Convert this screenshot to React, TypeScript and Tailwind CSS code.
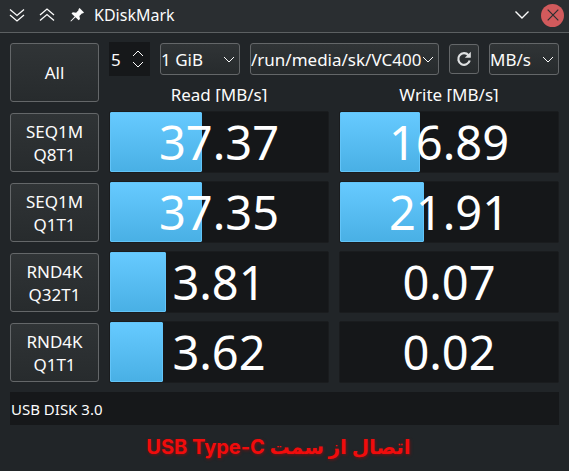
import { useState } from "react";

const tests = [
  { lines: ["SEQ1M", "Q8T1"], read: "37.37", readBar: 42, write: "16.89", writeBar: 36.5 },
  { lines: ["SEQ1M", "Q1T1"], read: "37.35", readBar: 42, write: "21.91", writeBar: 38.5 },
  { lines: ["RND4K", "Q32T1"], read: "3.81", readBar: 25.5, write: "0.07", writeBar: 0 },
  { lines: ["RND4K", "Q1T1"], read: "3.62", readBar: 24.5, write: "0.02", writeBar: 0 },
];

const buttonLook =
  "rounded-[3px] border border-[#646769] bg-linear-to-b from-[#303436] to-[#272b2d]";

function Chevron({ className = "" }: { className?: string }) {
  return (
    <svg viewBox="0 0 12 7" fill="none" stroke="currentColor" className={className} aria-hidden="true">
      <path d="M1 1l5 5 5-5" />
    </svg>
  );
}

function Select({ label, options, className = "" }: { label: string; options: string[]; className?: string }) {
  return (
    <div className={`relative h-8 ${className}`}>
      <select aria-label={label} className={`block h-full w-full appearance-none pt-px pr-4 leading-6 outline-none ${buttonLook}`}>
        {options.map((option) => (
          <option key={option}>{option}</option>
        ))}
      </select>
      <Chevron className="pointer-events-none absolute top-[13px] right-[5px] h-[7px] w-3" />
    </div>
  );
}

function TitleBar() {
  return (
    <header className="flex h-[33px] items-center border-b border-[#5c6062] bg-[#2a2e31] pr-[5px] pb-[2px] pl-2 text-[16px]">
      <button title="Keep below" className="mr-3 flex w-[18px] justify-center">
        <svg viewBox="0 0 18 16" fill="none" stroke="currentColor" strokeWidth="1.3" className="h-4 w-[18px]">
          <path d="M2 2.5l7 6 7-6M2 8l7 6 7-6" />
        </svg>
      </button>
      <button title="Keep above" className="mr-3 flex w-[18px] justify-center">
        <svg viewBox="0 0 18 16" fill="none" stroke="currentColor" strokeWidth="1.3" className="h-4 w-[18px]">
          <path d="M2 8l7-6 7 6M2 13.5l7-6 7 6" />
        </svg>
      </button>
      <button title="Pin to all desktops" className="mr-2 flex w-[18px] justify-center">
        <svg viewBox="0 0 16 16" fill="currentColor" className="size-4">
          <path d="M10.6 1L15 5.4l-1.2 1.1-.7-.2-2.7 2.6.6 3.1-1.3 1.2-3.2-3L2 14.6l-.6-.6 4.3-4.6-3.2-3L3.800 5.200l3.300.5 2.600-2.700-.3-.8z" />
        </svg>
      </button>
      <h1 className="flex-1">KDiskMark</h1>
      <button title="Minimize" className="mr-[11px]">
        <svg viewBox="0 0 16 10" fill="none" stroke="currentColor" strokeWidth="1.4" className="h-[10px] w-4">
          <path d="M1.5 1.5L8 8l6.5-6.5" />
        </svg>
      </button>
      <button title="Close" className="flex size-[23px] items-center justify-center rounded-full bg-[#d15a5c] text-[#2a2e31]">
        <svg viewBox="0 0 12 12" fill="none" stroke="currentColor" strokeWidth="1.2" className="size-3">
          <path d="M.7.7l10.6 10.6M11.3.7L.7 11.3" />
        </svg>
      </button>
    </header>
  );
}

function Toolbar() {
  const [count, setCount] = useState(5);

  return (
    <div className="flex items-center gap-[10px]">
      <div className="flex h-[34px] w-[41px] items-center bg-[#16181a] pl-[2px]">
        <input
          type="number"
          aria-label="Test count"
          min={1}
          max={9}
          value={count}
          onChange={(e) => setCount(Number(e.target.value))}
          className="w-[21px] flex-none [appearance:textfield] bg-transparent pt-px outline-none [&::-webkit-inner-spin-button]:appearance-none"
        />
        <div className="flex flex-col gap-1">
          <button aria-label="Increase" className="block" onClick={() => setCount(Math.min(9, count + 1))}>
            <Chevron className="h-[7px] w-3 rotate-180" />
          </button>
          <button aria-label="Decrease" className="block" onClick={() => setCount(Math.max(1, count - 1))}>
            <Chevron className="h-[7px] w-3" />
          </button>
        </div>
      </div>
      <Select label="Test size" options={["1 GiB"]} className="w-20" />
      <Select label="Storage" options={["/run/media/sk/VC400"]} className="min-w-0 flex-1" />
      <button title="Refresh" className={`flex size-[30px] items-center justify-center ${buttonLook}`}>
        <svg viewBox="0 0 16 16" fill="none" stroke="currentColor" strokeWidth="2.2" className="size-4 text-[#dfe1e2]">
          <path d="M13.7 9.5A5.8 5.8 0 1 1 12.5 4.2" />
          <path d="M14.8.8v6H8.8z" fill="currentColor" stroke="none" />
        </svg>
      </button>
      <Select label="Unit" options={["MB/s"]} className="w-[70px]" />
    </div>
  );
}

function Result({ label, value, bar }: { label: string; value: string; bar: number }) {
  return (
    <div
      role="meter"
      aria-label={label}
      aria-valuenow={Number(value)}
      className="relative h-[62px] rounded-[2px] border border-[#1a1c1e] bg-[#151719]"
    >
      {bar > 0 && (
        <div
          className="h-full rounded-[1px] border border-[#62c4f8] bg-linear-to-b from-[#66caff] to-[#49b0e5]"
          style={{ width: `${bar}%` }}
        />
      )}
      <span className="absolute inset-0 flex items-center justify-center text-[47px] leading-none text-white">
        {value}
      </span>
    </div>
  );
}

export default function App() {
  return (
    <div className="min-h-screen bg-[#212528] font-['Noto_Sans',sans-serif] text-[17px] leading-6 text-[#fcfcfc]">
      <TitleBar />
      <main className="px-[10px] pt-[9px]">
        <div className="grid grid-cols-[89px_1fr] gap-x-[10px]">
          <button className={`mt-px h-[59px] ${buttonLook}`}>All</button>
          <div>
            <Toolbar />
            <div className="mt-2 grid h-[18px] grid-cols-2 gap-x-[10px] overflow-hidden text-center leading-[22px]">
              <span>Read [MB/s]</span>
              <span>Write [MB/s]</span>
            </div>
          </div>
        </div>

        <div className="mt-[9px] grid grid-cols-[89px_1fr_1fr] gap-x-[10px] gap-y-2">
          {tests.map((test) => {
            const name = test.lines.join(" ");
            return (
              <div key={name} className="contents">
                <button className={`mt-[2px] h-[59px] leading-[23px] ${buttonLook}`}>
                  {test.lines[0]}
                  <br />
                  {test.lines[1]}
                </button>
                <Result label={`${name} read`} value={test.read} bar={test.readBar} />
                <Result label={`${name} write`} value={test.write} bar={test.writeBar} />
              </div>
            );
          })}
        </div>

        <input
          aria-label="Device"
          defaultValue="USB DISK 3.0"
          className="mt-[9px] block h-[33px] w-full bg-[#16181a] px-px text-[15px] outline-none"
        />
        <p
          dir="rtl"
          className="mt-2 pr-3 text-center font-['Inter','DejaVu_Sans',sans-serif] text-[20px] leading-7 font-bold text-[#f00c0c] [text-shadow:1px_1px_3px_rgba(180,0,0,0.6)]"
        >
          اتصال از سمت USB Type-C
        </p>
      </main>
    </div>
  );
}
